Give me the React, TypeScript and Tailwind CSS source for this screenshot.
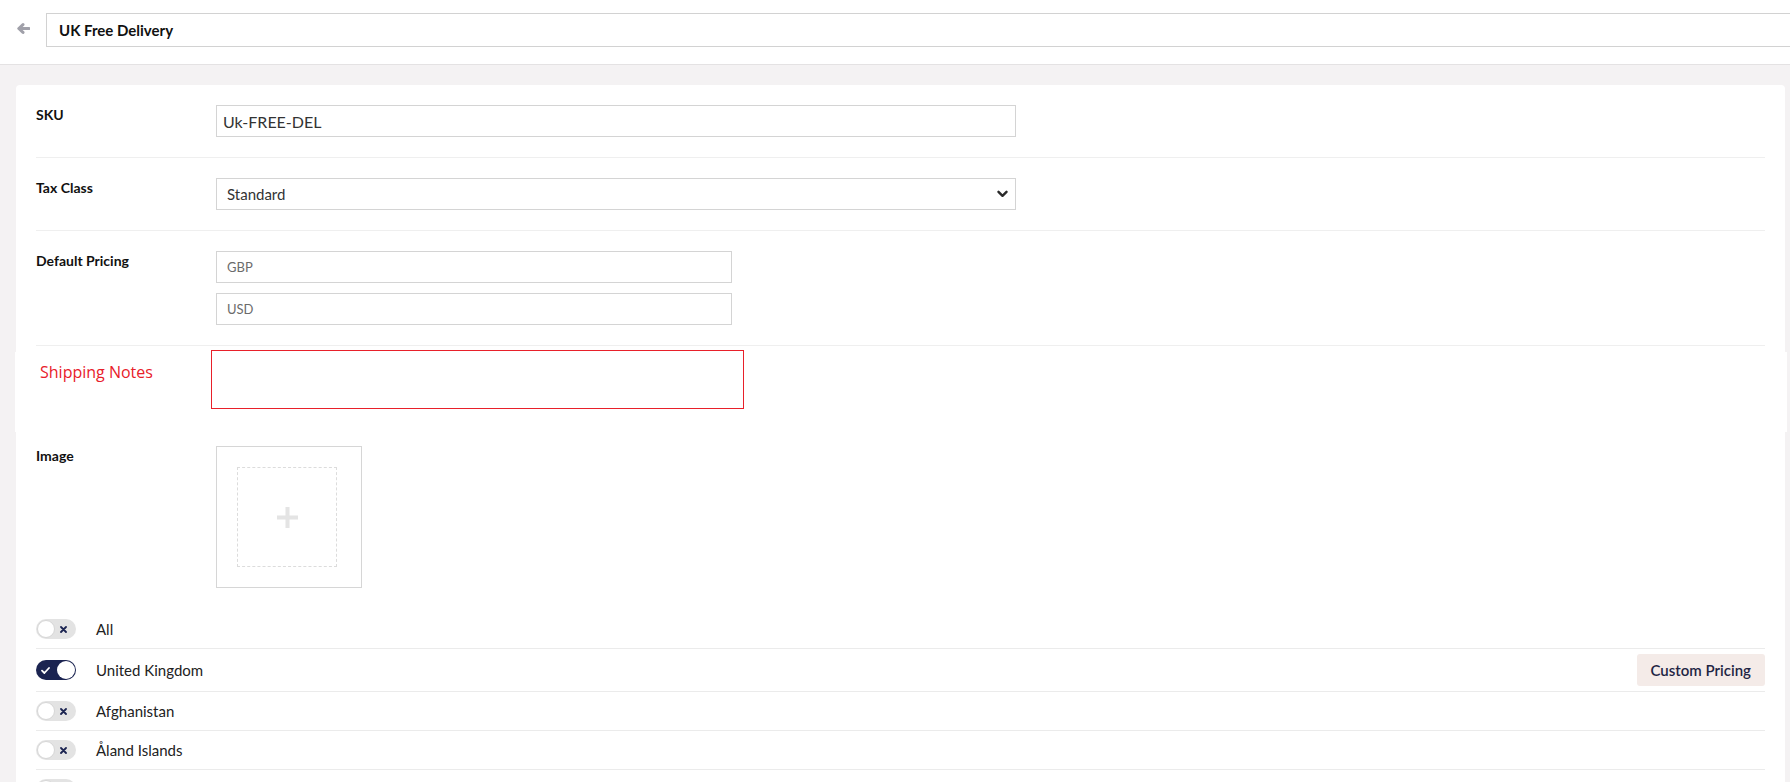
import React from 'react';

const countries = [
  { name: 'All', on: false },
  { name: 'United Kingdom', on: true, custom: true },
  { name: 'Afghanistan', on: false },
  { name: 'Åland Islands', on: false },
  { name: 'Albania', on: false },
  { name: 'Algeria', on: false },
];

// Kleiner Schalter wie im Original (aus = grau mit x, an = navy mit Haken)
const Toggle: React.FC<{ on: boolean }> = ({ on }) => {
  if (on) {
    return (
      <span className="flex h-[20px] w-[40px] shrink-0 items-center rounded-full bg-[#1b2451] pl-[5px] pr-[1px]">
        <svg width="9" height="7" viewBox="0 0 9 7" fill="none">
          <path d="M1 3.6 L3.4 6 L8 1" stroke="#ffffff" strokeWidth="1.8" strokeLinecap="round" strokeLinejoin="round" />
        </svg>
        <span className="ml-auto h-[18px] w-[18px] rounded-full bg-white" />
      </span>
    );
  }
  return (
    <span className="flex h-[20px] w-[40px] shrink-0 items-center rounded-full bg-[#e3e3e3] px-[1px]">
      <span className="h-[18px] w-[18px] rounded-full border border-[#d6d6d6] bg-white" />
      <svg className="ml-[5px]" width="7" height="7" viewBox="0 0 7 7" fill="none">
        <path d="M1 1 L6 6 M6 1 L1 6" stroke="#1b2451" strokeWidth="1.8" strokeLinecap="round" />
      </svg>
    </span>
  );
};

const Label: React.FC<{ children: React.ReactNode }> = ({ children }) => (
  <div className="w-[180px] shrink-0 text-[14px] leading-[20px] font-bold text-[#111]">{children}</div>
);

export default function App() {
  return (
    <div className="min-h-screen bg-[#f4f2f3]" style={{ fontFamily: 'Lato, "Open Sans", sans-serif' }}>
      {/* Kopfzeile */}
      <div className="h-[65px] overflow-hidden border-b border-[#e4e2e3] bg-white pt-[13px]">
        <div className="flex h-[34px] items-center">
          <svg className="ml-[17px] -mt-[3px] shrink-0" width="13" height="11" viewBox="0 0 13 11" fill="none">
            <path d="M6 1.6 L1.8 5.5 L6 9.4 M2.2 5.5 H12" stroke="#a0a0a9" strokeWidth="3" strokeLinecap="round" strokeLinejoin="round" />
          </svg>
          <input
            readOnly
            value="UK Free Delivery"
            className="ml-[16px] h-[34px] flex-1 border border-r-0 border-[#d2d2d2] pl-[12px] text-[15px] font-bold text-[#111] outline-none"
          />
        </div>
      </div>

      {/* Karte */}
      <div className="ml-[16px] mr-[5px] mt-[20px] rounded-t-[4px] bg-white px-[20px] pt-[20px] pb-[40px]">
        <div className="flex border-b border-[#efefef] pb-[20px]">
          <Label>SKU</Label>
          <input
            readOnly
            value="Uk-FREE-DEL"
            className="h-[32px] w-[800px] border border-[#d4d4d4] px-[6px] text-[16px] text-[#333] outline-none"
          />
        </div>

        <div className="flex border-b border-[#efefef] py-[20px]">
          <Label>Tax Class</Label>
          <div className="relative">
            <select
              defaultValue="standard"
              className="h-[32px] w-[800px] appearance-none border border-[#d4d4d4] bg-white pl-[10px] text-[15px] text-[#333] outline-none"
            >
              <option value="standard">Standard</option>
              <option value="reduced">Reduced</option>
              <option value="zero">Zero</option>
            </select>
            <svg className="pointer-events-none absolute right-[8px] top-[12px]" width="11" height="8" viewBox="0 0 11 8" fill="none">
              <path d="M1.5 1.8 L5.5 5.8 L9.5 1.8" stroke="#2a2a2a" strokeWidth="2.4" strokeLinecap="round" strokeLinejoin="round" />
            </svg>
          </div>
        </div>

        <div className="flex border-b border-[#efefef] py-[20px]">
          <Label>Default Pricing</Label>
          <div className="flex flex-col gap-[10px]">
            <input
              placeholder="GBP"
              className="h-[32px] w-[516px] border border-[#d4d4d4] px-[10px] text-[13px] text-[#333] outline-none placeholder:text-[#6b6b6b]"
            />
            <input
              placeholder="USD"
              className="h-[32px] w-[516px] border border-[#d4d4d4] px-[10px] text-[13px] text-[#333] outline-none placeholder:text-[#6b6b6b]"
            />
          </div>
        </div>

        {/* Versandhinweise */}
        <div className="-ml-[21px] -mr-[22px] mt-[6px] flex h-[80px] bg-white pl-[25px]">
          <div
            className="mt-[8px] w-[171px] shrink-0 text-[16px] leading-[24px] text-[#e8202a]"
            style={{ fontFamily: '"Open Sans", sans-serif' }}
          >
            Shipping Notes
          </div>
          <textarea className="-mt-[2px] h-[59px] w-[533px] resize-none border border-[#e8202a] outline-none" />
        </div>

        <div className="mt-[14px] flex">
          <Label>Image</Label>
          <div className="h-[142px] w-[146px] border border-[#d6d6d6] pl-[20px] pt-[20px]">
            <div className="flex h-[100px] w-[100px] items-center justify-center border border-dashed border-[#dcdcdc]">
              <svg width="21" height="21" viewBox="0 0 21 21" fill="#e4e4e4">
                <rect x="8.5" y="0" width="4" height="21" />
                <rect x="0" y="8.5" width="21" height="4" />
              </svg>
            </div>
          </div>
        </div>

        <div className="mt-[22px]">
          {countries.map((c) => (
            <div key={c.name} className="flex min-h-[39px] items-center gap-[20px] border-b border-[#ebebeb] py-[5px]">
              <Toggle on={c.on} />
              <span className="flex-1 text-[15px] text-[#222]">{c.name}</span>
              {c.custom && (
                <button className="h-[32px] rounded-[3px] bg-[#f4ebe8] px-[14px] text-[15px] font-semibold text-[#1f2544]">
                  Custom Pricing
                </button>
              )}
            </div>
          ))}
        </div>
      </div>
    </div>
  );
}
